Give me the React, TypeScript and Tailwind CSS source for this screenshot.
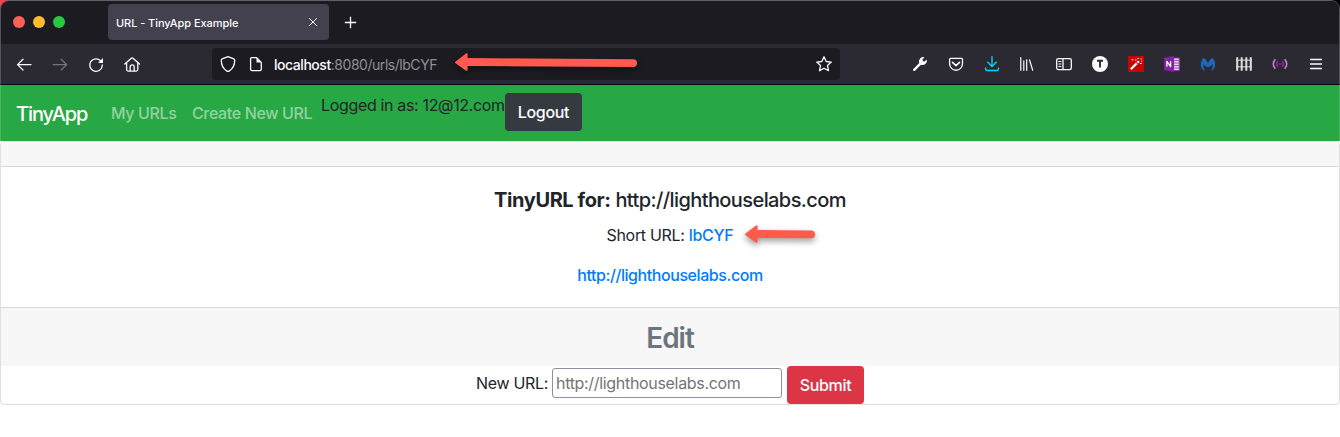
import type { ReactNode } from 'react';

function Glyph({ children, className = 'w-9' }: { children: ReactNode; className?: string }) {
  return (
    <span className={`flex h-full shrink-0 items-center justify-center ${className}`}>
      <svg width="20" height="20" viewBox="0 0 20 20" fill="none" stroke="#fbfbfe" strokeWidth="1.3" strokeLinecap="round" strokeLinejoin="round">
        {children}
      </svg>
    </span>
  );
}

function TabStrip() {
  return (
    <div className="flex h-11 items-start bg-[#1c1b22] pl-[12px]">
      <div className="mt-4 flex gap-2">
        <span className="size-3 rounded-full bg-[#ff5f57]" />
        <span className="size-3 rounded-full bg-[#febc2e]" />
        <span className="size-3 rounded-full bg-[#28c840]" />
      </div>
      <div className="mt-1 ml-[43px] flex h-9 w-[221px] items-center justify-between rounded bg-[#42414d] pt-0.5 pr-[11px] pl-2">
        <span className="text-[11px] font-medium tracking-[-0.06px] whitespace-nowrap text-[#fbfbfe]">URL - TinyApp Example</span>
        <svg className="-mt-0.5" width="10" height="10" viewBox="0 0 10 10" stroke="#fbfbfe" strokeWidth="1">
          <path d="M1.2 1.2l7.6 7.6M8.8 1.2L1.2 8.8" />
        </svg>
      </div>
      <svg className="mt-4 ml-[15px]" width="13" height="13" viewBox="0 0 13 13" stroke="#fbfbfe" strokeWidth="1.3">
        <path d="M6.5 .8v11.4M.8 6.5h11.4" />
      </svg>
    </div>
  );
}

function Toolbar() {
  return (
    <div className="flex h-10 items-center bg-[#2b2a33] pl-[5px]">
      <Glyph><path d="M17 10.600H3.500M9 5.200L3.500 10.600 9 16" /></Glyph>
      <Glyph>
        <g stroke="#75747c"><path d="M3.200 10.600h13.300M11.200 5.200l5.400 5.400-5.400 5.400" /></g>
      </Glyph>
      <Glyph>
        <path d="M14.800 7A6.300 6.300 0 1 0 16.300 11" />
        <path d="M17 4v5h-5z" fill="#fbfbfe" stroke="none" />
      </Glyph>
      <Glyph className="w-[35px]">
        <path d="M2.800 10.100L9.300 4.200a1.300 1.300 0 0 1 1.700 0l6.500 5.900M4.600 9v6.600c0 .9.6 1.500 1.500 1.500h8.200c.9 0 1.500-.6 1.500-1.500V9M8.200 17v-4.100a2 2 0 0 1 4 0V17" />
      </Glyph>
      <div className="ml-[63px] flex h-8 w-[628px] shrink-0 items-center rounded bg-[#1c1b22] pl-[2px]">
        <Glyph className="w-7">
          <path d="M10 2.600l5.800 2.200c.6.2.9.7.9 1.300.1 5.500-1.800 8.700-5.600 11a2 2 0 0 1-2.200 0C5.100 14.800 3.200 11.600 3.300 6.100c0-.6.3-1.100.9-1.300z" />
        </Glyph>
        <Glyph className="w-7">
          <path d="M5.600 3.700h5l4.700 4.700v6.800c0 .8-.6 1.400-1.400 1.400H6c-.8 0-1.400-.6-1.400-1.400V4.700c0-.6.4-1 1-1z" />
          <path d="M10.500 3.500l5 5h-5z" fill="#fbfbfe" stroke="none" />
        </Glyph>
        <span className="ml-[4px] pt-px text-[14px] tracking-[-0.46px] text-[#8f8f98]">
          <span className="font-medium text-[#fbfbfe]">localhost</span>:8080/urls/lbCYF
        </span>
        <Glyph className="ml-auto w-8">
          <path d="M10 2.800l2.200 4.700 5.100.6-3.800 3.500 1 5.100L10 14.200l-4.500 2.500 1-5.100-3.800-3.500 5.100-.6z" />
        </Glyph>
      </div>
      <div className="ml-[62px] flex h-full">
        <Glyph>
          <path d="M4.200 15.800l6.600-6.600" strokeWidth="2.400" />
          <path d="M16.800 5.600l-2.700 2.200-1.900-1.900 2.200-2.700a4.400 4.400 0 0 0-5.200 5.600l2.100 2.100a4.400 4.400 0 0 0 5.500-5.300z" fill="#fbfbfe" stroke="none" />
        </Glyph>
        <Glyph>
          <path d="M4.600 4.400h10.900c.6 0 1 .4 1 1v4.400a6.450 6.450 0 0 1-12.900 0V5.400c0-.6.4-1 1-1z" />
          <path d="M6.500 8.300l3.500 3.300 3.500-3.300" strokeWidth="1.600" />
        </Glyph>
        <Glyph>
          <g stroke="#00ddff"><path d="M10 2.600v10M5.700 8.300l4.300 4.300 4.300-4.300M3.600 13.800v1.300c0 .8.6 1.400 1.400 1.400h10c.8 0 1.400-.6 1.400-1.400v-1.300" /></g>
        </Glyph>
        <Glyph>
          <path d="M2.600 3.500v12.800M5.600 6.800v9.500M8.500 5.800v10.500M11.300 5.900l3.200 10.400" strokeWidth="1.200" transform="translate(.2 0)" />
        </Glyph>
        <Glyph>
          <rect x="2.700" y="4.600" width="14.600" height="11" rx="1.600" />
          <path d="M9 4.600v11" />
          <path d="M4.800 7.500h2.200M4.800 10h2.200M4.800 12.500h2.200" strokeWidth="1" />
        </Glyph>
        <Glyph>
          <circle cx="10" cy="10" r="8" fill="#fbfbfe" stroke="none" />
          <path d="M7 6.800h6M10 6.800v6.700" stroke="#2b2a33" strokeWidth="1.900" strokeLinecap="butt" />
        </Glyph>
        <Glyph>
          <path d="M2 2h16v16H2z" fill="#c80505" stroke="none" />
          <path d="M4.800 15.300l5.900-5.900" strokeWidth="2.200" strokeLinecap="butt" />
          <path d="M11.300 8.800l1.600-1.600" strokeWidth="2.200" strokeLinecap="butt" />
          <path d="M6 5.800h1M9.500 6h.6M12 4.500h.5M15 5h.4M14.300 9.500h.9M15.500 7.200h.4" strokeWidth="1" />
        </Glyph>
        <Glyph>
          <path d="M10 4h7.300v12.500H10z" fill="#e7cdee" stroke="#8e35a9" strokeWidth="1" />
          <path d="M12 6.500h5.800M12 9h5.800M12 11.500h5.800M12 14h5.800" stroke="#8e35a9" strokeWidth=".8" />
          <path d="M2 3.700L12 2v16L2 16.300z" fill="#7f25a3" stroke="none" />
          <path d="M4.900 12.800V7.400l3.700 5.200V7.200" strokeWidth="1.300" strokeLinecap="butt" />
        </Glyph>
        <Glyph>
          <path d="M7.200 16.700C2.400 16 1.500 9.500 5 4c2.600.9 4 2.900 5 5.500 1-2.600 2.400-4.600 5-5.500 3.500 5.500 2.600 12-2.200 12.700 1.900-1.900 2.100-4.300 1.300-6.700-.8 1.800-2.200 3-4.100 3.200-1.900-.2-3.300-1.400-4.100-3.200-.8 2.400-.6 4.800 1.300 6.700z" fill="#2167b8" stroke="none" />
        </Glyph>
        <Glyph>
          <g strokeLinecap="butt">
            <path d="M2 6.200h16M2 12.800h16" stroke="#a5a5aa" strokeWidth="1.500" />
            <path d="M3.200 3.300v13.500M7.700 3.300v13.500M12.300 3.300v13.500M16.800 3.300v13.500" stroke="#dededf" strokeWidth="2" />
          </g>
        </Glyph>
        <Glyph>
          <circle cx="10" cy="10" r="1.100" fill="#ac25bd" stroke="none" />
          <path d="M7.500 7.500a4 4 0 0 0 0 5M12.500 7.500a4 4 0 0 1 0 5" stroke="#9d20b2" strokeWidth="1.400" />
          <path d="M4.900 5.700a7.200 7.200 0 0 0 0 8.600M15.100 5.700a7.200 7.200 0 0 1 0 8.600" stroke="#c58bd0" strokeWidth="1.500" />
        </Glyph>
        <Glyph><path d="M4.500 5.500h11M4.500 10h11M4.500 14.500h11" strokeWidth="1.300" /></Glyph>
      </div>
    </div>
  );
}

function Arrow({ length, className, slope = 0 }: { length: number; className: string; slope?: number }) {
  return (
    <svg className={`pointer-events-none absolute overflow-visible drop-shadow-[0_3px_3px_rgba(0,0,0,0.4)] ${className}`} width={length} height="20" viewBox={`0 0 ${length} 20`} fill="#ff5a4d">
      <path d={`M.3 8.700L11 .4q1.600-.7 1.600 1V5L${length - 4} ${5.500 + slope}a4 4 0 0 1 0 7.800L12.600 13v3.700q0 1.600-1.600 1L.3 10.100q-.7-.7 0-1.400z`} />
    </svg>
  );
}

export default function App() {
  return (
    <div className="relative h-[437px] w-[1340px] overflow-hidden bg-white font-['Inter','Liberation_Sans',sans-serif] text-base leading-6 tracking-[-0.31px] text-[#212529]">
      <div className="h-[85px] bg-gradient-to-r from-[#f0444d] from-50% to-black to-50%">
        <div className="h-full overflow-hidden rounded-t-[9px] border-x border-t border-b border-x-[#54535a] border-t-[#606066] border-b-[#08080b]">
          <div className="-mt-px"><TabStrip /><Toolbar /></div>
        </div>
      </div>

      <nav className="flex h-14 items-start border-x border-[#49b65f] bg-[#28a745] px-[15px] py-2 whitespace-nowrap">
        <a className="mt-[6px] w-[95px] text-xl leading-[30px] font-[450] tracking-[-1.08px] text-white">TinyApp</a>
        <a className="mt-2 w-[81px] font-[450] tracking-[-0.36px] text-white/50">My URLs</a>
        <a className="mt-2 w-[129px] font-[450] tracking-[-0.36px] text-white/50">Create New URL</a>
        <span className="w-[184px] tracking-[-0.34px]">Logged in as: 12@12.com</span>
        <button className="h-[38px] w-[77px] rounded bg-[#343a40] font-medium text-white">Logout</button>
      </nav>

      <main className="h-[264px] rounded border border-[#dfdfdf] text-center">
        <div className="h-[24px] rounded-t bg-[#f7f7f7]" />
        <section className="h-[142px] border-y border-[#d8d8d8] pt-[21px]">
          <h5 className="text-xl leading-6 font-[480] tracking-[-0.59px]"><b className="font-bold tracking-[-0.4px]">TinyURL for:</b> http://lighthouselabs.com</h5>
          <p className="mt-[11px]">Short URL: <a className="font-[450] text-[#007bff]">lbCYF</a></p>
          <p className="mt-4"><a className="font-[450] tracking-[-0.43px] text-[#007bff]">http://lighthouselabs.com</a></p>
        </section>
        <header className="h-[58px] bg-[#f7f7f7] pt-[13px] text-[28px] leading-[34px] font-[560] tracking-[-1px] text-[#6c757d]">Edit</header>
        <form className="flex h-[38px] justify-center">
          <label className="mt-[5px] w-[76px] text-left whitespace-nowrap">New URL:</label>
          <input className="mt-0.5 h-[30px] w-[230px] rounded-[3px] border border-[#8f8f9d] bg-white px-[3px] tracking-[-0.32px] placeholder:text-[#757575]" placeholder="http://lighthouselabs.com" />
          <button type="button" className="ml-[5px] h-[38px] w-[77px] rounded bg-[#dc3545] font-medium text-white">Submit</button>
        </form>
      </main>

      <Arrow length={183} slope={0.7} className="top-[53px] left-[455px]" />
      <Arrow length={71} className="top-[225px] left-[745px]" />
    </div>
  );
}
